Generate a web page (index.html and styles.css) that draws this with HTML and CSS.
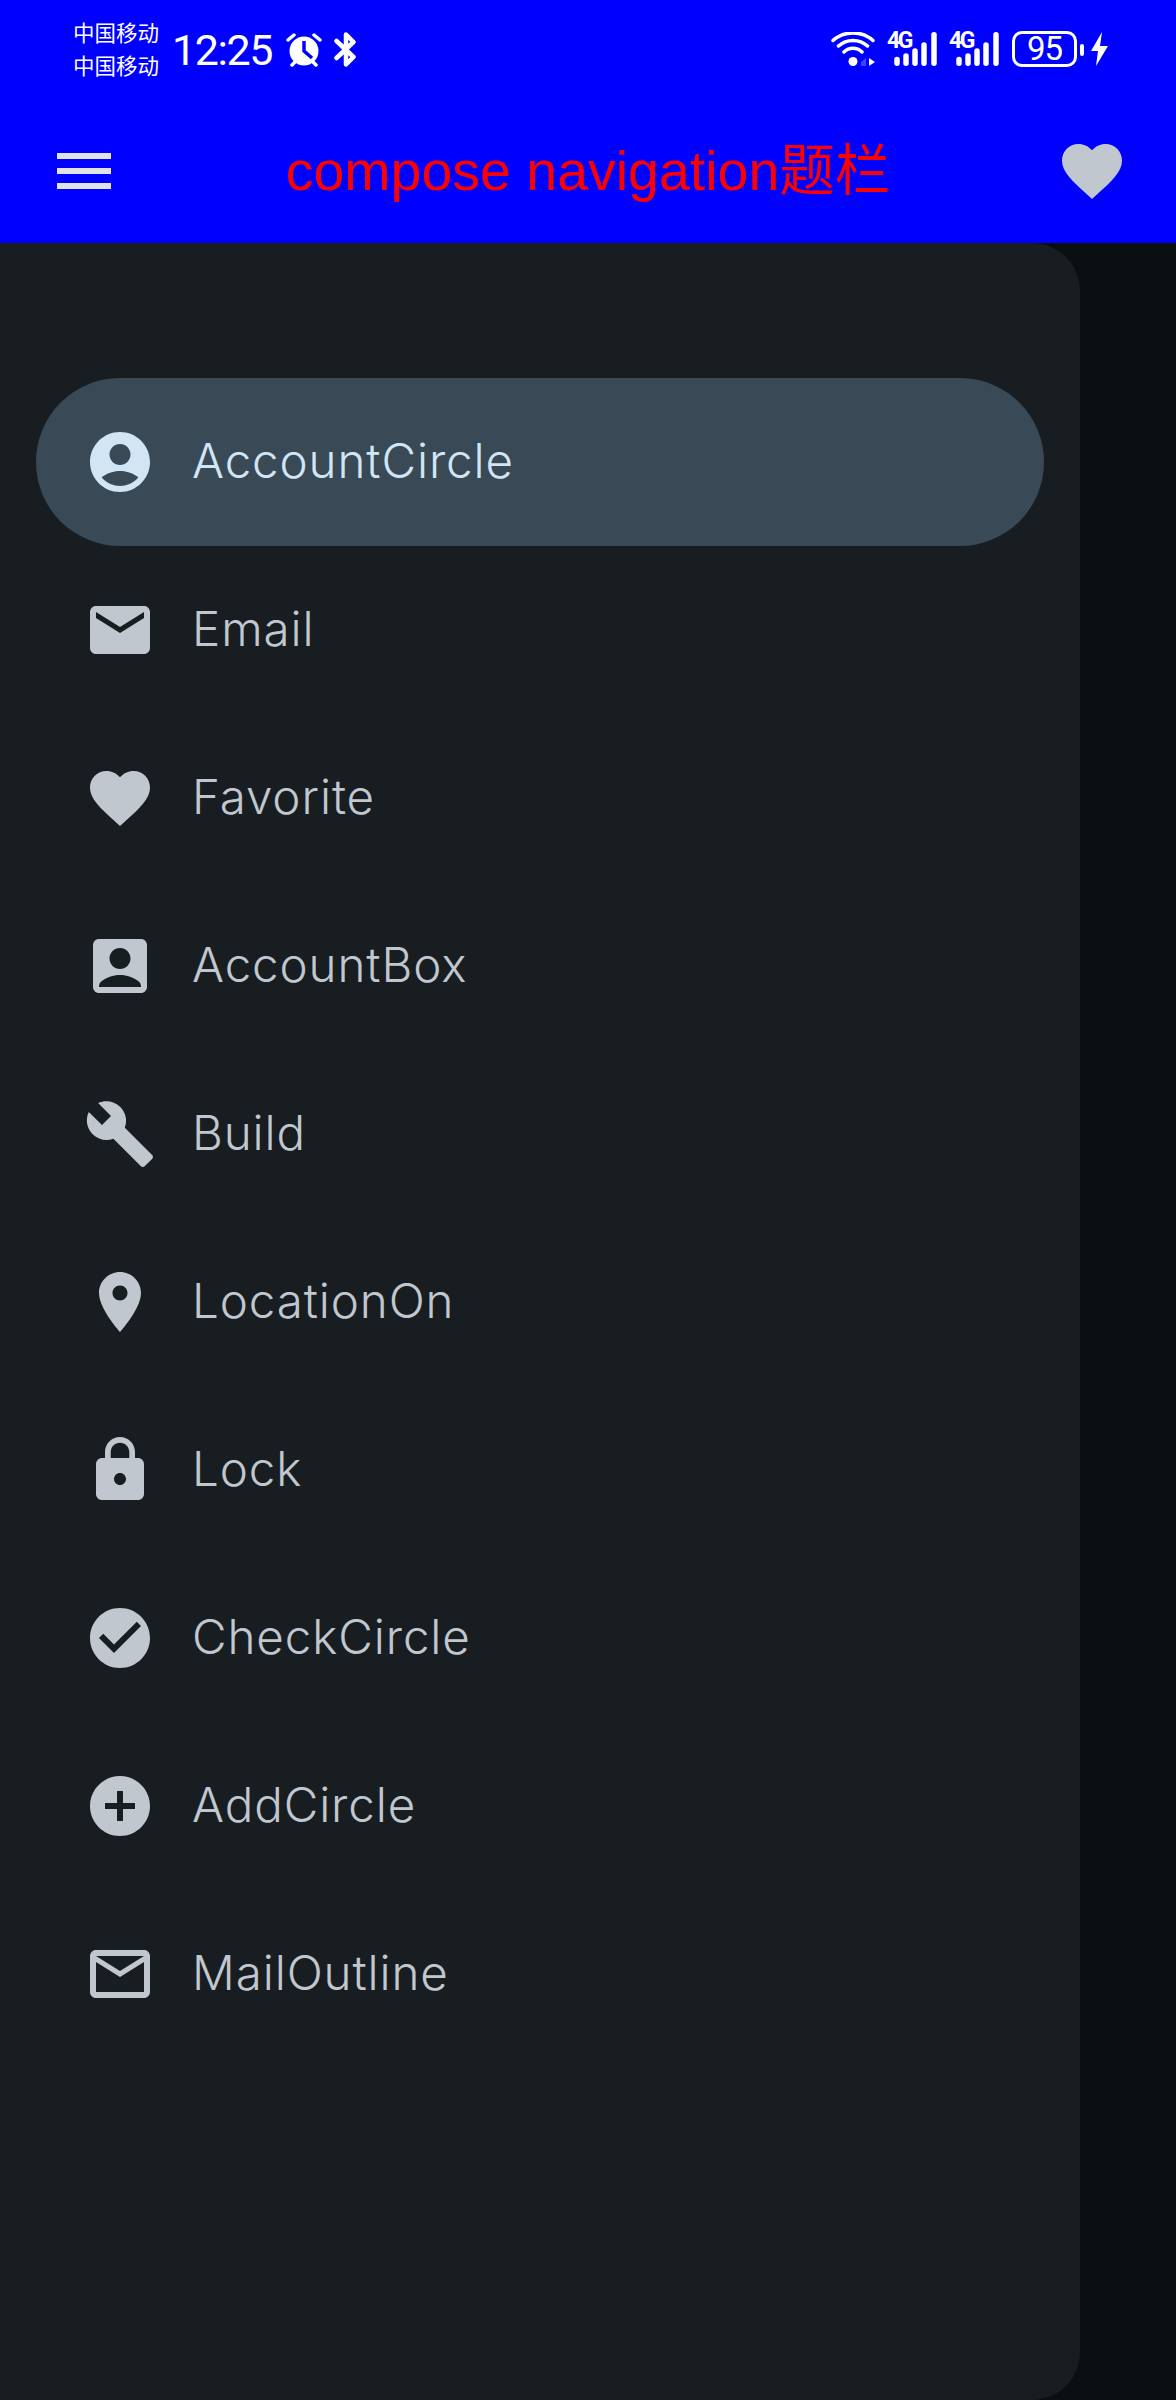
FILE: index.html
```html
<!DOCTYPE html>
<html lang="en">
<head>
  <meta charset="UTF-8">
  <meta name="viewport" content="width=device-width, initial-scale=1.0">
  <title>compose navigation</title>
  <link rel="stylesheet" href="styles.css">
</head>
<body>

  <header class="header">
    <div class="status-bar">
      <div class="carrier">
        <span>中国移动</span>
        <span>中国移动</span>
      </div>
      <span class="clock">12:25</span>
      <svg class="alarm" viewBox="0 0 36 34">
        <circle cx="18" cy="18" r="14.5" fill="#fff"/>
        <path d="M18 8v10l8 7" fill="none" stroke="#00f" stroke-width="3.5"/>
        <path d="M2 7l6-5M34 7l-6-5M6 32l3-3M30 32l-3-3" fill="none" stroke="#fff" stroke-width="3.5" stroke-linecap="round"/>
      </svg>
      <svg class="bluetooth" viewBox="0 0 22 35">
        <path d="M2.5 9l17 16-7.5 7.5V2.5l7.5 7.5-17 16" fill="none" stroke="#fff" stroke-width="4.5" stroke-linecap="round" stroke-linejoin="round"/>
      </svg>
      <div class="status-right">
        <svg class="wifi" viewBox="0 0 44 34">
          <circle cx="22" cy="29.5" r="4.5" fill="#fff"/>
          <path d="M13 20c5-5 13-5 18 0M7.500 14c8-7.500 21-7.500 29 0M2 8.500c11-10 29-10 40 0" fill="none" stroke="#fff" stroke-width="3.5" stroke-linecap="round"/>
          <path d="M30 30l5-4v8h-5z" fill="#fff" opacity="0.25"/>
          <path d="M38 26l6 4-6 4z" fill="#fff"/>
        </svg>
        <div class="signal">
          <span class="net">4G</span>
          <svg class="bars" viewBox="0 0 43 34">
            <path d="M3 27.500v3.750M12 24v7.250M21 19v12.250M30 13v18.250M40 2.750v28.500" fill="none" stroke="#fff" stroke-width="5.5" stroke-linecap="round"/>
          </svg>
        </div>
        <div class="signal">
          <span class="net">4G</span>
          <svg class="bars" viewBox="0 0 43 34">
            <path d="M3 27.500v3.750M12 24v7.250M21 19v12.250M30 13v18.250M40 2.750v28.500" fill="none" stroke="#fff" stroke-width="5.5" stroke-linecap="round"/>
          </svg>
        </div>
        <div class="battery">95</div>
        <span class="battery-cap"></span>
        <svg class="bolt" viewBox="0 0 17 34">
          <path d="M11 0L0 19h7l-2 15L17 14H9z" fill="#fff"/>
        </svg>
      </div>
    </div>

    <div class="app-bar">
      <svg class="icon menu-icon" viewBox="0 0 24 24"><path d="M3 18h18v-2H3v2zm0-5h18v-2H3v2zm0-7v2h18V6H3z"/></svg>
      <h1 class="title">compose navigation题栏</h1>
      <svg class="icon" viewBox="0 0 24 24"><path d="M12 21.35l-1.45-1.32C5.4 15.36 2 12.28 2 8.5 2 5.42 4.42 3 7.5 3c1.74 0 3.41.81 4.5 2.09C13.09 3.81 14.76 3 16.5 3 19.58 3 22 5.42 22 8.5c0 3.78-3.4 6.86-8.55 11.54L12 21.35z"/></svg>
    </div>
  </header>

  <main class="content">
    <nav class="drawer">
      <a class="item selected">
        <svg class="icon" viewBox="0 0 24 24"><path d="M12 2C6.48 2 2 6.48 2 12s4.48 10 10 10 10-4.48 10-10S17.52 2 12 2zm0 4c1.93 0 3.5 1.57 3.5 3.5S13.93 13 12 13s-3.5-1.57-3.5-3.5S10.07 6 12 6zm0 14c-2.03 0-4.43-.82-6.14-2.88C7.55 15.8 9.68 15 12 15s4.45.8 6.14 2.12C16.43 19.18 14.03 20 12 20z"/></svg>
        <span>AccountCircle</span>
      </a>
      <a class="item">
        <svg class="icon" viewBox="0 0 24 24"><path d="M20 4H4c-1.1 0-1.99.9-1.99 2L2 18c0 1.1.9 2 2 2h16c1.1 0 2-.9 2-2V6c0-1.1-.9-2-2-2zm0 4l-8 5-8-5V6l8 5 8-5v2z"/></svg>
        <span>Email</span>
      </a>
      <a class="item">
        <svg class="icon" viewBox="0 0 24 24"><path d="M12 21.35l-1.45-1.32C5.4 15.36 2 12.28 2 8.5 2 5.42 4.42 3 7.5 3c1.74 0 3.41.81 4.5 2.09C13.09 3.81 14.76 3 16.5 3 19.58 3 22 5.42 22 8.5c0 3.78-3.4 6.86-8.55 11.54L12 21.35z"/></svg>
        <span>Favorite</span>
      </a>
      <a class="item">
        <svg class="icon" viewBox="0 0 24 24"><path d="M19 3H5c-1.1 0-2 .9-2 2v14c0 1.1.9 2 2 2h14c1.1 0 2-.9 2-2V5c0-1.1-.9-2-2-2zm-7 3c1.93 0 3.5 1.57 3.5 3.5S13.93 13 12 13s-3.5-1.57-3.5-3.5S10.07 6 12 6zm7 13H5v-.23c0-.62.28-1.2.76-1.58C7.47 15.82 9.64 15 12 15s4.53.82 6.24 2.19c.48.38.76.97.76 1.58V19z"/></svg>
        <span>AccountBox</span>
      </a>
      <a class="item">
        <svg class="icon" viewBox="0 0 24 24"><path d="M22.7 19l-9.1-9.1c.9-2.3.4-5-1.5-6.9-2-2-5-2.4-7.4-1.3L9 6 6 9 1.6 4.7C.4 7.1.9 10.1 2.9 12.1c1.9 1.9 4.6 2.4 6.9 1.5l9.1 9.1c.4.4 1 .4 1.4 0l2.3-2.3c.5-.4.5-1.1.1-1.4z"/></svg>
        <span>Build</span>
      </a>
      <a class="item">
        <svg class="icon" viewBox="0 0 24 24"><path d="M12 2C8.13 2 5 5.13 5 9c0 5.25 7 13 7 13s7-7.75 7-13c0-3.87-3.13-7-7-7zm0 9.5c-1.38 0-2.5-1.12-2.5-2.5s1.12-2.5 2.5-2.5 2.5 1.12 2.5 2.5-1.12 2.5-2.5 2.5z"/></svg>
        <span>LocationOn</span>
      </a>
      <a class="item">
        <svg class="icon" viewBox="0 0 24 24"><path d="M18 8h-1V6c0-2.76-2.24-5-5-5S7 3.24 7 6v2H6c-1.1 0-2 .9-2 2v10c0 1.1.9 2 2 2h12c1.1 0 2-.9 2-2V10c0-1.1-.9-2-2-2zm-6 9c-1.1 0-2-.9-2-2s.9-2 2-2 2 .9 2 2-.9 2-2 2zm3.1-9H8.9V6c0-1.71 1.39-3.1 3.1-3.1 1.71 0 3.1 1.39 3.1 3.1v2z"/></svg>
        <span>Lock</span>
      </a>
      <a class="item">
        <svg class="icon" viewBox="0 0 24 24"><path d="M12 2C6.48 2 2 6.48 2 12s4.48 10 10 10 10-4.48 10-10S17.52 2 12 2zm-2 15l-5-5 1.41-1.41L10 14.17l7.59-7.59L19 8l-9 9z"/></svg>
        <span>CheckCircle</span>
      </a>
      <a class="item">
        <svg class="icon" viewBox="0 0 24 24"><path d="M12 2C6.48 2 2 6.48 2 12s4.48 10 10 10 10-4.48 10-10S17.52 2 12 2zm5 11h-4v4h-2v-4H7v-2h4V7h2v4h4v2z"/></svg>
        <span>AddCircle</span>
      </a>
      <a class="item">
        <svg class="icon" viewBox="0 0 24 24"><path d="M20 4H4c-1.1 0-1.99.9-1.99 2L2 18c0 1.1.9 2 2 2h16c1.1 0 2-.9 2-2V6c0-1.1-.9-2-2-2zm0 14H4V8l8 5 8-5v10zm-8-7L4 6h16l-8 5z"/></svg>
        <span>MailOutline</span>
      </a>
    </nav>
  </main>

</body>
</html>
```

FILE: styles.css
```css
* {
  box-sizing: border-box;
}

body {
  margin: 0;
  width: 1176px;
  height: 2400px;
  display: flex;
  flex-direction: column;
  overflow: hidden;
  font-family: 'Noto Sans', sans-serif;
  background-color: #0a0f11;
}

.header {
  height: 243px;
  background-color: #0000ff;
}

/* status bar */
.status-bar {
  height: 99px;
  display: flex;
  align-items: flex-start;
  color: white;
  padding: 15px 68px 0 73px;
}

.carrier {
  display: flex;
  flex-direction: column;
  width: 87px;
  font-family: 'Noto Sans CJK SC', sans-serif;
  font-size: 21.5px;
  line-height: 33px;
}

.clock {
  width: 102px;
  margin: 13px 0 0 12px;
  font-family: Roboto, sans-serif;
  font-size: 43px;
  letter-spacing: -1.4px;
  line-height: 44px;
}

.alarm {
  width: 36px;
  height: 34px;
  margin: 18px 0 0 12px;
}

.bluetooth {
  width: 22px;
  height: 35px;
  margin: 17px 0 0 12px;
}

.status-right {
  margin-left: auto;
  display: flex;
  align-items: flex-start;
  padding-top: 17px;
}

.wifi {
  width: 44px;
  height: 34px;
}

.signal {
  display: flex;
  margin-left: 12px;
  position: relative;
  width: 50px;
  height: 34px;
  justify-content: flex-end;
}

.net {
  position: absolute;
  left: 0;
  top: -3px;
  font-family: Roboto, sans-serif;
  font-size: 23px;
  font-weight: bold;
  letter-spacing: -2.4px;
  line-height: 24px;
}

.bars {
  width: 43px;
  height: 34px;
}

.battery {
  width: 65px;
  height: 36px;
  margin: -1px 0 0 13px;
  border: 3px solid white;
  border-radius: 10px;
  text-align: center;
  font-family: Roboto, sans-serif;
  font-size: 33px;
  letter-spacing: -1px;
  line-height: 30px;
}

.battery-cap {
  width: 4px;
  height: 12px;
  margin: 12px 0 0 3px;
  background-color: white;
  border-radius: 2px;
}

.bolt {
  width: 17px;
  height: 34px;
  margin-left: 7px;
}

/* app bar */
.app-bar {
  height: 144px;
  display: flex;
  align-items: flex-start;
  justify-content: space-between;
  padding: 36px 48px 0;
}

.title {
  margin: 0;
  font-family: 'Liberation Sans', 'Noto Sans CJK SC', sans-serif;
  font-size: 55.5px;
  font-weight: normal;
  line-height: 72px;
  color: #ff0000;
}

.icon {
  width: 72px;
  height: 72px;
  flex-shrink: 0;
  fill: #c1c7ce;
}

.menu-icon {
  fill: #dfe3e7;
}

/* drawer */
.content {
  flex: 1;
  min-height: 0;
}

.drawer {
  width: 1080px;
  height: 100%;
  padding: 135px 36px 0;
  background-color: #181d21;
  border-radius: 0 48px 48px 0;
}

.item {
  height: 168px;
  display: flex;
  align-items: center;
  gap: 36px;
  padding-left: 48px;
  border-radius: 84px;
  font-family: Inter, sans-serif;
  font-size: 47.5px;
  font-weight: 300;
  letter-spacing: 0.9px;
  color: #c1c7ce;
}

.item span {
  padding-bottom: 4px;
}

.selected {
  background-color: #394955;
  color: #d2e5f5;
}

.selected .icon {
  fill: #d2e5f5;
}
```
